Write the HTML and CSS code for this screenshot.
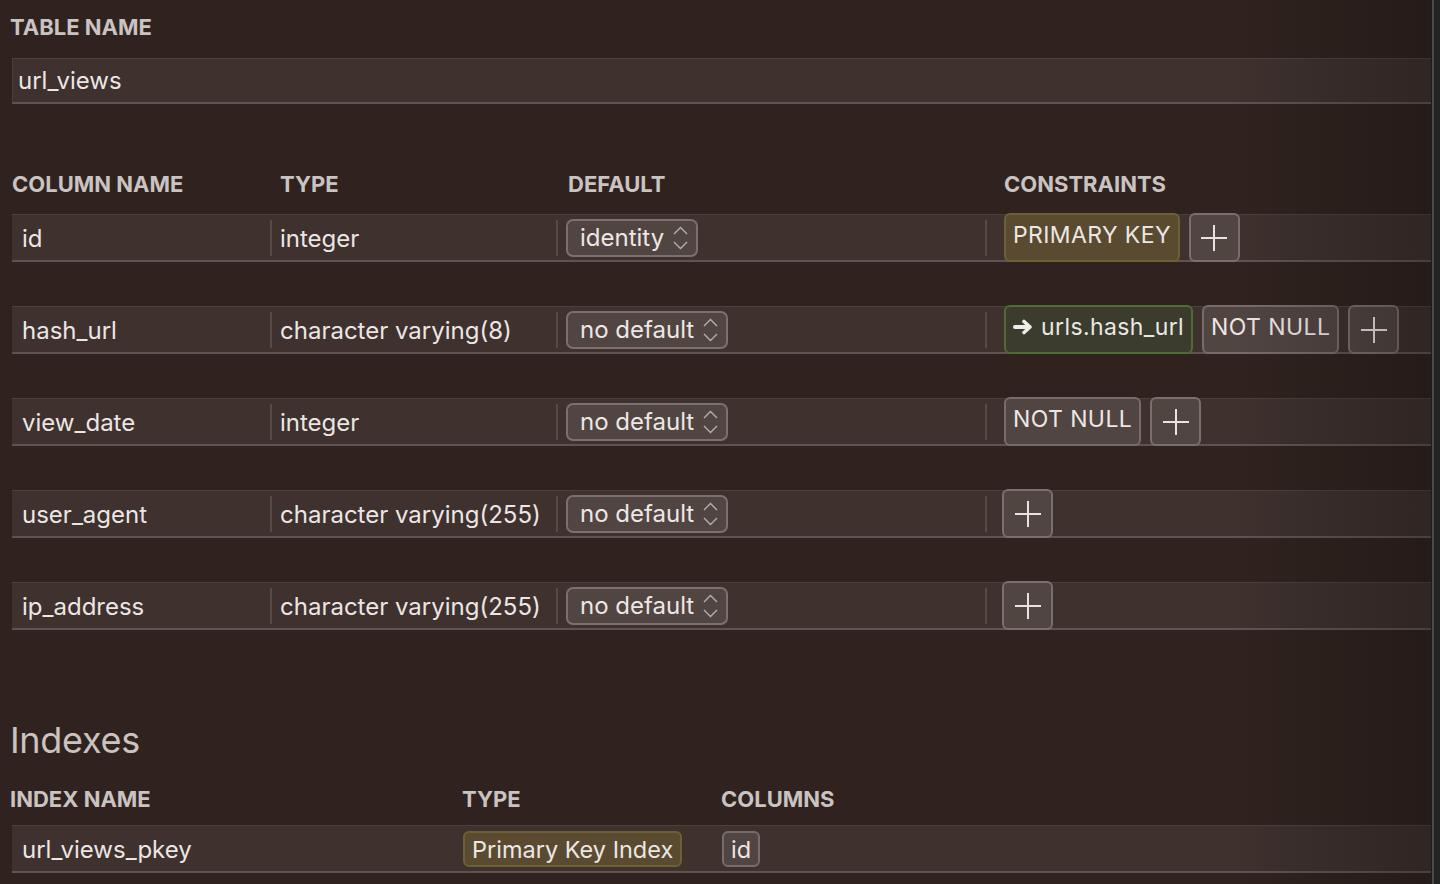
FILE: index.html
```html
<!DOCTYPE html>
<html lang="en">
<head>
<meta charset="utf-8">
<title>url_views</title>
<link rel="stylesheet" href="styles.css">
</head>
<body>
<div class="app">
  <main class="main">
    <div class="label label-first">TABLE NAME</div>
    <div class="name-input">url_views</div>

    <div class="cols-grid cols-head">
      <div class="h h1">COLUMN NAME</div>
      <div class="h h2">TYPE</div>
      <div class="h h3">DEFAULT</div>
      <div class="h h4">CONSTRAINTS</div>
    </div>

    <div class="rows">
      <div class="cols-grid row">
        <div class="cell c1">id</div>
        <div class="cell c2 sep">integer</div>
        <div class="cell c3 sep"><span class="select">identity<svg class="chev" width="15" height="24" viewBox="0 0 15 24"><path d="M1 8 L7.5 1.5 L14 8 M1 16 L7.5 22.5 L14 16" fill="none" stroke="#b9b0ad" stroke-width="1.3"/></svg></span></div>
        <div class="cell c4 sep">
          <span class="badge pk">PRIMARY KEY</span>
          <span class="plus"><svg width="26" height="26" viewBox="0 0 26 26"><path d="M13 0 V26 M0 13 H26" stroke="#e8e2e0" stroke-width="2"/></svg></span>
        </div>
      </div>

      <div class="cols-grid row">
        <div class="cell c1">hash_url</div>
        <div class="cell c2 sep">character varying(8)</div>
        <div class="cell c3 sep"><span class="select">no default<svg class="chev" width="15" height="24" viewBox="0 0 15 24"><path d="M1 8 L7.5 1.5 L14 8 M1 16 L7.5 22.5 L14 16" fill="none" stroke="#b9b0ad" stroke-width="1.3"/></svg></span></div>
        <div class="cell c4 sep">
          <span class="badge fk"><svg class="arrow" width="21" height="16" viewBox="0 0 21 16"><path d="M2 8 H15" stroke="#f0ece9" stroke-width="4" stroke-linecap="round"/><path d="M11 2.5 L17 8 L11 13.5" fill="none" stroke="#f0ece9" stroke-width="3.6" stroke-linecap="round" stroke-linejoin="round"/></svg>urls.hash_url</span>
          <span class="badge nn">NOT NULL</span>
          <span class="plus"><svg width="26" height="26" viewBox="0 0 26 26"><path d="M13 0 V26 M0 13 H26" stroke="#e8e2e0" stroke-width="2"/></svg></span>
        </div>
      </div>

      <div class="cols-grid row">
        <div class="cell c1">view_date</div>
        <div class="cell c2 sep">integer</div>
        <div class="cell c3 sep"><span class="select">no default<svg class="chev" width="15" height="24" viewBox="0 0 15 24"><path d="M1 8 L7.5 1.5 L14 8 M1 16 L7.5 22.5 L14 16" fill="none" stroke="#b9b0ad" stroke-width="1.3"/></svg></span></div>
        <div class="cell c4 sep">
          <span class="badge nn">NOT NULL</span>
          <span class="plus"><svg width="26" height="26" viewBox="0 0 26 26"><path d="M13 0 V26 M0 13 H26" stroke="#e8e2e0" stroke-width="2"/></svg></span>
        </div>
      </div>

      <div class="cols-grid row">
        <div class="cell c1">user_agent</div>
        <div class="cell c2 sep">character varying(255)</div>
        <div class="cell c3 sep"><span class="select">no default<svg class="chev" width="15" height="24" viewBox="0 0 15 24"><path d="M1 8 L7.5 1.5 L14 8 M1 16 L7.5 22.5 L14 16" fill="none" stroke="#b9b0ad" stroke-width="1.3"/></svg></span></div>
        <div class="cell c4 sep c4-empty">
          <span class="plus"><svg width="26" height="26" viewBox="0 0 26 26"><path d="M13 0 V26 M0 13 H26" stroke="#e8e2e0" stroke-width="2"/></svg></span>
        </div>
      </div>

      <div class="cols-grid row">
        <div class="cell c1">ip_address</div>
        <div class="cell c2 sep">character varying(255)</div>
        <div class="cell c3 sep"><span class="select">no default<svg class="chev" width="15" height="24" viewBox="0 0 15 24"><path d="M1 8 L7.5 1.5 L14 8 M1 16 L7.5 22.5 L14 16" fill="none" stroke="#b9b0ad" stroke-width="1.3"/></svg></span></div>
        <div class="cell c4 sep c4-empty">
          <span class="plus"><svg width="26" height="26" viewBox="0 0 26 26"><path d="M13 0 V26 M0 13 H26" stroke="#e8e2e0" stroke-width="2"/></svg></span>
        </div>
      </div>
    </div>

    <h2 class="section-title">Indexes</h2>
    <div class="idx-grid idx-head">
      <div class="h label-idx">INDEX NAME</div>
      <div class="h">TYPE</div>
      <div class="h">COLUMNS</div>
    </div>
    <div class="idx-grid row idx-row">
      <div class="cell c1">url_views_pkey</div>
      <div class="cell ic2"><span class="tag tag-pk">Primary Key Index</span></div>
      <div class="cell ic3"><span class="tag tag-col">id</span></div>
    </div>
  </main>
  <div class="edge"></div>
</div>
</body>
</html>
```

FILE: styles.css
```css
* { box-sizing: border-box; }

html, body {
  margin: 0;
  padding: 0;
  height: 884px;
  overflow: hidden;
  background: #30231f;
  font-family: Inter, "Noto Sans", "Liberation Sans", sans-serif;
}

.app {
  display: flex;
  height: 884px;
}

.main {
  position: relative;
  flex: 1;
  padding: 14px 0 0 12px;
  background: #30231f;
}

.main::after {
  content: "";
  position: absolute;
  inset: 0;
  pointer-events: none;
  background: linear-gradient(to right, rgba(0,0,0,0) 86%, rgba(0,0,0,0.24) 100%);
}

.edge {
  width: 9px;
  background: linear-gradient(to right, #1c1c1c 0 1px, #4b4b4b 1px 3px, #232323 3px);
}

.label, .h {
  font-size: 22px;
  line-height: 24px;
  font-weight: 700;
  color: #c9c3c1;
  letter-spacing: 0;
}

.label-first {
  margin-left: -2px;
  height: 24px;
  padding-top: 1px;
}

.name-input {
  margin-top: 20px;
  height: 46px;
  background: #3e312e;
  border-top: 1px solid #4d413e;
  border-bottom: 2px solid #5f5451;
  border-left: 1px solid #4a3e3b;
  padding-left: 5px;
  display: flex;
  align-items: center;
  font-size: 24px;
  color: #ebe6e4;
}

/* columns grid */
.cols-grid {
  display: grid;
  grid-template-columns: 258px 286px 429px 1fr;
}

.cols-head {
  margin-top: 68px;
  height: 24px;
}
.h1 { padding-left: 0; }
.h2 { padding-left: 10px; }
.h3 { padding-left: 12px; }
.h4 { padding-left: 19px; }

.rows {
  margin-top: 18px;
  display: flex;
  flex-direction: column;
  gap: 44px;
}

.row {
  height: 48px;
  background: #3e312e;
  border-top: 1px solid #4c403d;
  border-bottom: 2px solid #5f5451;
  align-items: center;
  font-size: 24px;
  color: #ebe6e4;
}

.cell {
  height: 36px;
  display: flex;
  align-items: center;
  white-space: nowrap;
}

.c1 { padding-left: 10px; padding-top: 2px; }
.c2 { padding-left: 8px; padding-top: 2px; }
.c3 { padding-left: 8px; }
.c4 { padding-left: 17px; gap: 9px; }
.c4-empty { padding-left: 15px; }

.sep { border-left: 2px solid #574b48; }

.select {
  display: inline-flex;
  align-items: center;
  height: 38px;
  padding: 0 8px 0 12px;
  border: 2px solid #7b706d;
  border-radius: 7px;
  background: #514542;
  color: #ece7e5;
  font-size: 24px;
}
.chev { margin-left: 9px; }

.badge {
  display: inline-flex;
  align-items: flex-start;
  height: 49px;
  padding: 6px 7px 0 7px;
  border: 2px solid;
  border-radius: 6px;
  font-size: 23px;
  line-height: 28px;
  letter-spacing: 0.4px;
  color: #ece7e5;
}

.pk { background: #5a4b30; border-color: #6c6036; }
.fk { background: #3b3c2d; border-color: #4f6c36; }
.nn { background: #514542; border-color: #776c69; }

.arrow { margin: 6px 7px 0 0; }

.plus {
  display: inline-flex;
  align-items: center;
  justify-content: center;
  width: 51px;
  height: 49px;
  border: 2px solid #7a6f6c;
  border-radius: 6px;
  background: #514542;
}

.section-title {
  margin: 88px 0 0 -2px;
  font-size: 36px;
  line-height: 44px;
  font-weight: 400;
  color: #cac3c0;
  letter-spacing: -0.3px;
}

.idx-grid {
  display: grid;
  grid-template-columns: 450px 259px 1fr;
}

.idx-head {
  margin-top: 25px;
  height: 24px;
}
.label-idx { margin-left: -2px; }

.idx-row {
  margin-top: 14px;
}

.ic2 { padding-left: 1px; }
.ic3 { padding-left: 1px; }

.tag {
  display: inline-flex;
  align-items: center;
  height: 36px;
  border: 2px solid;
  border-radius: 6px;
  font-size: 23.5px;
  color: #ece7e5;
}
.tag-pk { padding: 2px 7px 0 7px; background: #5a4b30; border-color: #6c6036; }
.tag-col { padding: 2px 7px 0 7px; background: #514542; border-color: #776c69; }
```
